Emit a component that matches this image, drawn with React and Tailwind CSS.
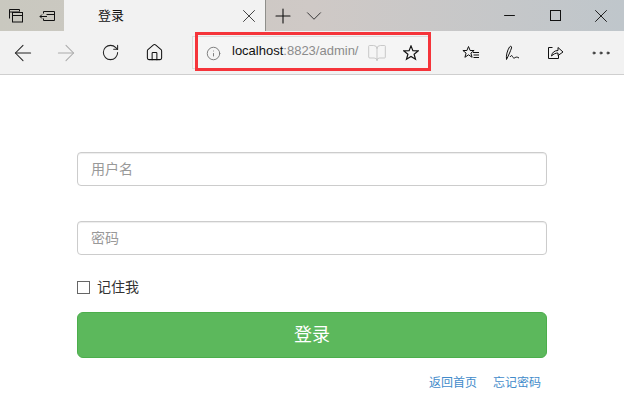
import React from "react";
import { ArrowLeft, ArrowRight, RotateCw, Home, Plus, ChevronDown, X, Minus, Info, BookOpen, MoreHorizontal } from "lucide-react";

const FONT = "font-['Liberation_Sans','Noto_Sans_CJK_SC',sans-serif]";

const ToolButton = ({ children, className = "" }) => (
  <div className={`flex items-center justify-center ${className}`}>{children}</div>
);

const TitleBar = () => (
  <div className="flex h-[31px] bg-gradient-to-r from-[#c9c8bf] via-[#cfc9c6] to-[#bfc6cb]">
    <ToolButton className="w-[32px] text-[#111]">
      <svg width="16" height="16" viewBox="0 0 16 16" fill="none" stroke="currentColor">
        <path d="M1.500 10.500v-9h10v2M1.500 4h10" />
        <rect x="4.500" y="4.500" width="10" height="9.500" fill="#c9c8bf" />
        <path d="M4.500 7.500h10" />
      </svg>
    </ToolButton>
    <ToolButton className="w-[32px] text-[#111]">
      <svg width="18" height="14" viewBox="0 0 18 14" fill="none" stroke="currentColor">
        <path d="M4.500 2.500h11v9h-11v-2M4.500 2.500v2M7.500 5.500h8M8 7.500H1M3 5.500l-2 2 2 2" />
      </svg>
    </ToolButton>
    <div className="flex w-[201px] items-center bg-[#f2f2f2] pl-[34px] pr-[5px]">
      <span className="flex-1 text-[13px] text-[#111]">登录</span>
      <X size={22} strokeWidth={1} className="text-[#333]" />
    </div>
    <div className="w-px bg-[#8f8f8b]" />
    <ToolButton className="w-[33px] text-[#111]">
      <Plus size={24} strokeWidth={1.1} />
    </ToolButton>
    <ToolButton className="ml-[7px] w-[15px] text-[#333]">
      <ChevronDown size={26} strokeWidth={0.9} className="shrink-0" />
    </ToolButton>
    <div className="flex-1" />
    <ToolButton className="w-[46px] text-[#111]">
      <Minus size={17} strokeWidth={1.4} />
    </ToolButton>
    <ToolButton className="w-[46px] text-[#111]">
      <svg width="11" height="11" viewBox="0 0 11 11" fill="none" stroke="currentColor">
        <rect x="0.500" y="0.500" width="10" height="10" />
      </svg>
    </ToolButton>
    <ToolButton className="w-[46px] pr-px text-[#111]">
      <X size={22} strokeWidth={1} />
    </ToolButton>
  </div>
);

const AddressBar = () => (
  <div className="relative mt-[5px] flex h-[33px] w-[239px] items-center border border-[#dcdcdc] bg-[#f5f5f5] pl-[13px]">
    <Info size={15} strokeWidth={1.5} className="mt-[2px] text-[#777]" />
    <span className="ml-[11px] mt-[-3px] text-[13px] text-[#111]">
      localhost<span className="text-[#8b8b8b]">:8823/admin/</span>
    </span>
    <BookOpen size={20} strokeWidth={1.1} className="ml-[9px] mt-[1px] text-[#c4c4c4]" />
    <svg width="16" height="16" viewBox="0 0 16 16" fill="none" stroke="#111" strokeWidth="1.200" className="ml-[16px] mt-[1px]">
      <path d="M8 .9l1.900 4.700 5.300.3-4.100 3.300 1.400 5.100L8 11.500l-4.500 2.800 1.400-5.100L.8 5.900l5.300-.3z" />
    </svg>
    {/* red annotation from the screenshot */}
    <div className="absolute left-[2px] top-[-5px] h-[39px] w-[236px] border-[3px] border-[#f5343a]" />
  </div>
);

const Toolbar = () => (
  <div className="flex h-[44px] border-b border-[#cfcfcf] bg-[#f2f2f2]">
    <ToolButton className="h-[43px] w-[44px] pl-[1px] text-[#222]">
      <ArrowLeft size={26} strokeWidth={0.95} />
    </ToolButton>
    <ToolButton className="h-[43px] w-[44px] text-[#aaa]">
      <ArrowRight size={26} strokeWidth={0.95} />
    </ToolButton>
    <ToolButton className="h-[43px] w-[44px] text-[#222]">
      <RotateCw size={19} strokeWidth={1.3} />
    </ToolButton>
    <ToolButton className="h-[43px] w-[44px] text-[#111]">
      <Home size={19} strokeWidth={1.3} />
    </ToolButton>
    <div className="w-[16px]" />
    <AddressBar />
    <ToolButton className="ml-[18px] h-[43px] w-[44px] text-[#111]">
      <svg width="18" height="16" viewBox="0 0 18 16" fill="none" stroke="currentColor">
        <path d="M6.500 1.500l1.600 4h4l-3.200 2.600 1.200 4.200-3.600-2.500-3.600 2.500 1.200-4.200L.9 5.500h4z" />
        <path d="M11 7.500h6M11.500 10h5.500M11.500 12.500h5.500" />
      </svg>
    </ToolButton>
    <ToolButton className="h-[43px] w-[40px] text-[#111]">
      <svg width="16" height="18" viewBox="0 0 16 18" fill="none" stroke="currentColor">
        <path d="M1.500 15.500c-.6-4 .8-9 3-12.500 1.200-1.500 2.500-.5 2 1-1 3-2.500 6.500-5 11.500zM5 13c1-1.500 2-2 2.500-.5.400 1.300 1.500 2 2.500 1.200 1-.7 2-1 4 .3" />
      </svg>
    </ToolButton>
    <ToolButton className="h-[43px] w-[44px] text-[#111]">
      <svg width="17" height="16" viewBox="0 0 17 16" fill="none" stroke="currentColor">
        <path d="M5.500 2.500h-4v11h10v-3.500" />
        <path d="M4.500 11c.5-3.500 3-5.500 6.500-5.500V2.500l5 4.500-5 3.500V8c-2.500 0-4.500 1-6.500 3z" />
      </svg>
    </ToolButton>
    <ToolButton className="h-[43px] w-[47px] text-[#222]">
      <MoreHorizontal size={24} strokeWidth={1} />
    </ToolButton>
  </div>
);

const Field = ({ placeholder, type = "text", className = "" }) => (
  <input
    type={type}
    placeholder={placeholder}
    className={`h-[34px] w-full rounded-[4px] border border-[#ccc] bg-white px-[13px] text-[14px] shadow-[inset_0_1px_1px_rgba(0,0,0,0.075)] outline-none placeholder:text-[#999] ${className}`}
  />
);

const LoginForm = () => (
  <form className="mx-[77px] flex flex-col pt-[77px]">
    <Field placeholder="用户名" />
    <Field placeholder="密码" type="password" className="mt-[35px]" />
    <label className="mt-[23px] flex h-[18px] items-center text-[14px] text-[#333]">
      <span className="h-[13px] w-[13px] border border-[#666] bg-white" />
      <span className="ml-[7px]">记住我</span>
    </label>
    <button
      type="button"
      className="mt-[16px] h-[46px] w-full rounded-[6px] border border-[#4cae4c] bg-[#5cb85c] text-[18px] text-white"
    >
      登录
    </button>
    <div className="mt-[16px] flex justify-end gap-[16px] pr-[6px] text-[12px] text-[#428bca]">
      <a href="#">返回首页</a>
      <a href="#">忘记密码</a>
    </div>
  </form>
);

const App = () => (
  <div className={`h-[418px] w-[624px] overflow-hidden bg-white ${FONT}`}>
    <TitleBar />
    <Toolbar />
    <LoginForm />
  </div>
);

export default App;
